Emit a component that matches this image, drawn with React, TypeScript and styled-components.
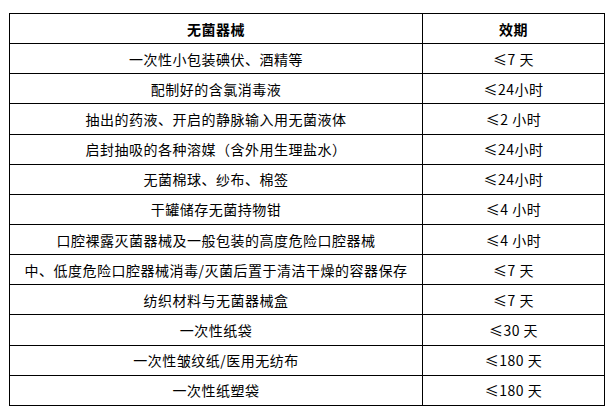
import React from 'react';
import styled, { createGlobalStyle } from 'styled-components';

const GlobalStyle = createGlobalStyle`
  html, body {
    margin: 0;
    padding: 0;
    background: #fff;
  }
  body {
    font-family: "Noto Sans CJK SC", "DejaVu Sans", sans-serif;
    color: #000;
  }
`;

const Page = styled.div`
  padding: 13px 0 0 9px;
`;

const Table = styled.table`
  width: 596px;
  height: 393px;
  border-collapse: collapse;
  border: 1px solid #000;
  table-layout: fixed;
`;

const NameCol = styled.col`
  width: 413px;
`;

const Cell = styled.td<{ $head?: boolean }>`
  border: 1px solid #000;
  padding: 0;
  text-align: center;
  vertical-align: middle;
  font-size: 14px;
  letter-spacing: 0.5px;
  line-height: 1;
  font-weight: ${(p) => (p.$head ? 700 : 400)};
  white-space: nowrap;
`;

const rows: [string, string][] = [
  ['一次性小包装碘伏、酒精等', '≤7 天'],
  ['配制好的含氯消毒液', '≤24小时'],
  ['抽出的药液、开启的静脉输入用无菌液体', '≤2 小时'],
  ['启封抽吸的各种溶媒（含外用生理盐水）', '≤24小时'],
  ['无菌棉球、纱布、棉签', '≤24小时'],
  ['干罐储存无菌持物钳', '≤4 小时'],
  ['口腔裸露灭菌器械及一般包装的高度危险口腔器械', '≤4 小时'],
  ['中、低度危险口腔器械消毒/灭菌后置于清洁干燥的容器保存', '≤7 天'],
  ['纺织材料与无菌器械盒', '≤7 天'],
  ['一次性纸袋', '≤30 天'],
  ['一次性皱纹纸/医用无纺布', '≤180 天'],
  ['一次性纸塑袋', '≤180 天'],
];

const App: React.FC = () => {
  return (
    <Page>
      <GlobalStyle />
      <Table>
        <colgroup>
          <NameCol />
          <col />
        </colgroup>
        <tbody>
          <tr>
            <Cell $head>无菌器械</Cell>
            <Cell $head>效期</Cell>
          </tr>
          {rows.map(([name, period]) => (
            <tr key={name}>
              <Cell>{name}</Cell>
              <Cell>{period}</Cell>
            </tr>
          ))}
        </tbody>
      </Table>
    </Page>
  );
};

export default App;
